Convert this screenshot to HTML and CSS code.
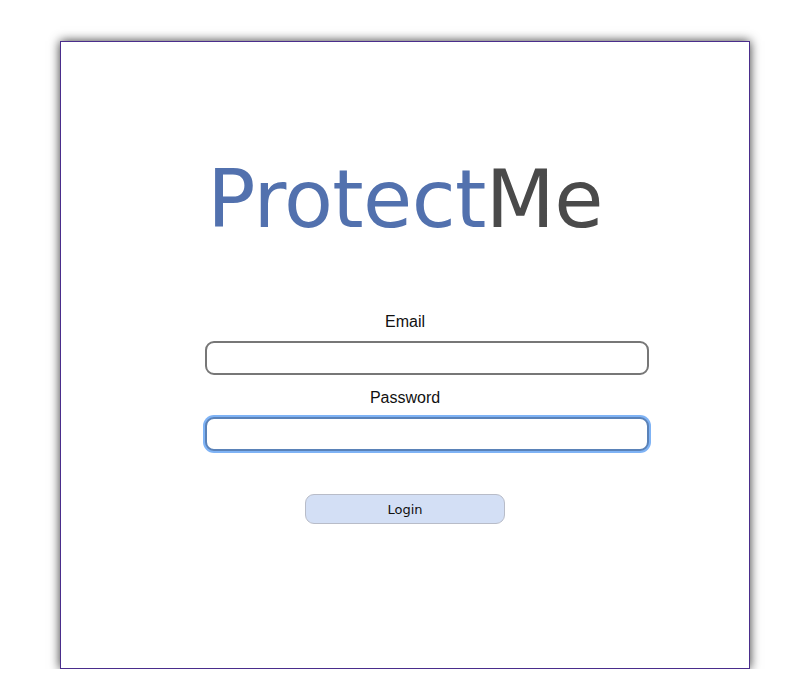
FILE: index.html
```html
<!DOCTYPE html>
<html>
<head>
<meta charset="utf-8">
<link rel="stylesheet" href="styles.css">
</head>
<body>
<div class="card">
  <h1 class="logo"><span class="logo-a">Protect</span><span class="logo-b">Me</span></h1>
  <form class="form">
    <label class="label" for="email">Email</label>
    <input class="field" id="email" type="text">
    <label class="label" for="password">Password</label>
    <input class="field field-focus" id="password" type="password">
    <button class="btn" type="button">Login</button>
  </form>
</div>
</body>
</html>
```
FILE: styles.css
```css
html, body { margin: 0; padding: 0; background: #fff; }
body {
  font-family: "Liberation Sans", Arial, sans-serif;
  padding: 41px 0 0 60px;
}
.card {
  box-sizing: border-box;
  width: 690px;
  height: 628px;
  border: 1px solid #4a2d8c;
  background: #fff;
  box-shadow: 0 0 10px rgba(0,0,0,0.8);
  display: flex;
  flex-direction: column;
  align-items: center;
}
.logo {
  margin: 110px 0 0 0;
  font-family: "DejaVu Sans", sans-serif;
  font-weight: normal;
  font-size: 80px;
  line-height: 96px;
  letter-spacing: -0.6px;
}
.logo-a { color: #5271ae; }
.logo-b { color: #4a4a4a; }
.form {
  width: 400px;
  margin-top: 64px;
  display: flex;
  flex-direction: column;
  align-items: center;
}
.label {
  font-size: 16px;
  line-height: 20px;
  color: #111;
  margin-bottom: 9px;
}
.field {
  box-sizing: border-box;
  align-self: flex-start;
  width: 444px;
  height: 34px;
  border: 2px solid #777;
  border-radius: 9px;
  background: #fff;
  margin: 0 0 13px 0;
  outline: none;
}
.field-focus {
  border-color: #5a82b8;
  box-shadow: 0 0 0 2px #7fb3f5;
}
.btn {
  margin-top: 30px;
  width: 200px;
  height: 30px;
  border: 1px solid #b8bcc8;
  border-radius: 9px;
  background: #d3dff5;
  font-family: "DejaVu Sans", sans-serif;
  font-size: 13px;
  color: #111;
}
```
